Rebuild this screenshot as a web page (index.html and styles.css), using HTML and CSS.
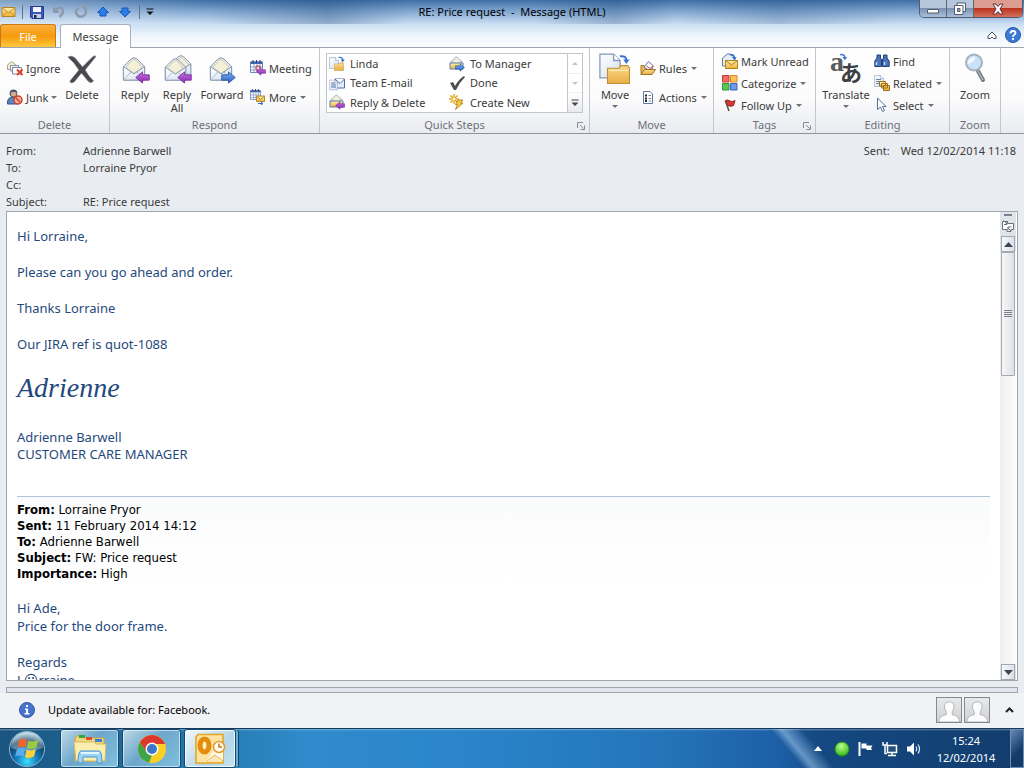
FILE: index.html
```html
<!DOCTYPE html>
<html lang="en">
<head>
    <meta charset="UTF-8">
    <meta name="viewport" content="width=device-width, initial-scale=1.0">
    <title>RE: Price request - Message (HTML)</title>
    <link rel="stylesheet" href="styles.css">
</head>
<body>

    <!-- shared icon shapes -->
    <svg class="defs" aria-hidden="true">
        <defs>
            <linearGradient id="g-yellow" x1="0" y1="0" x2="0" y2="1">
                <stop offset="0" stop-color="#fff0b0"/><stop offset="1" stop-color="#f0b030"/>
            </linearGradient>
            <linearGradient id="g-folder" x1="0" y1="0" x2="0" y2="1">
                <stop offset="0" stop-color="#fbd98b"/><stop offset="1" stop-color="#e9ae45"/>
            </linearGradient>
            <linearGradient id="g-paper" x1="0" y1="0" x2="1" y2="1">
                <stop offset="0" stop-color="#ffffff"/><stop offset="1" stop-color="#d5e0ee"/>
            </linearGradient>
            <linearGradient id="g-purple" x1="0" y1="0" x2="0" y2="1">
                <stop offset="0" stop-color="#c66fe0"/><stop offset="1" stop-color="#8a2bb0"/>
            </linearGradient>
            <linearGradient id="g-blue" x1="0" y1="0" x2="0" y2="1">
                <stop offset="0" stop-color="#7fb2f5"/><stop offset="1" stop-color="#2a5fc4"/>
            </linearGradient>
            <radialGradient id="g-orb" cx="0.5" cy="0.85" r="0.8">
                <stop offset="0" stop-color="#3ce0ff"/><stop offset="0.4" stop-color="#1478ba"/><stop offset="0.75" stop-color="#123f66"/><stop offset="1" stop-color="#a9cbdc"/>
            </radialGradient>
            <radialGradient id="g-green" cx="0.45" cy="0.3" r="0.7">
                <stop offset="0" stop-color="#b9ff8e"/><stop offset="1" stop-color="#35b81a"/>
            </radialGradient>
        </defs>
        <symbol id="envelope-open" viewBox="0 0 24 27">
            <path d="M1 11 L9 3 Q12 0.5 15 3 L23 11 V25 H1 Z" fill="#dfe8f3" stroke="#8495ad"/>
            <path d="M3.500 12 L10 4.500 Q12 3 14 4.500 L20.500 12 L12 18 Z" fill="#f3efd8" stroke="#c9bd92" stroke-width=".7"/>
            <path d="M1 11 L12 18.500 L23 11 V25 H1 Z" fill="url(#g-paper)" stroke="#8495ad"/>
            <path d="M1.500 24.500 L9 16.500 M22.500 24.500 L15 16.500" stroke="#a9b7ca" fill="none"/>
        </symbol>
        <symbol id="arrow-left" viewBox="0 0 14 12">
            <path d="M.7 6 L7 .8 V3.500 H13.300 V8.500 H7 V11.200 Z" fill="url(#g-purple)" stroke="#7a2a9c" stroke-width=".8"/>
        </symbol>
        <symbol id="arrow-right" viewBox="0 0 14 12">
            <path d="M13.300 6 L7 .8 V3.500 H.7 V8.500 H7 V11.200 Z" fill="url(#g-blue)" stroke="#2653a4" stroke-width=".8"/>
        </symbol>
        <symbol id="curve" viewBox="0 0 12 12">
            <path d="M1 2.500 Q8 1.500 8 7" fill="none" stroke="#3b72cf" stroke-width="2.200"/><path d="M4.500 6 H11.500 L8 11 Z" fill="#3b72cf"/>
        </symbol>
        <symbol id="sheet" viewBox="0 0 12 14">
            <path d="M.5 .5 H8 L11.500 4 V13.500 H.5 Z" fill="url(#g-paper)" stroke="#8499b8" stroke-width=".7"/><path d="M8 .5 V4 H11.500" fill="#fff" stroke="#8499b8" stroke-width=".7"/>
        </symbol>
        <symbol id="folder" viewBox="0 0 22 19">
            <path d="M.5 4 V18.500 H21.500 V4 L20 1.500 H13 L11.500 4 Z" fill="url(#g-folder)" stroke="#c08e3a"/><path d="M2 6 H20" stroke="#fff1c4"/>
        </symbol>
        <symbol id="calendar" viewBox="0 0 13 13">
            <path d="M.5 2 H12.500 V12.500 H.5 Z" fill="#fff" stroke="#6a85b8"/><path d="M.5 1.500 H12.500 V4 H.5 Z" fill="#4668b0"/><path d="M3 0 V3 M6.500 0 V3 M10 0 V3" stroke="#28427c"/><path d="M1 7 H12 M1 10 H12 M4 4 V12 M7 4 V12 M10 4 V12" stroke="#8ea6cf"/>
        </symbol>
        <symbol id="person" viewBox="0 0 26 26">
            <path d="M2 26 Q2 19 10 18 V15 Q8 13 8 8 Q9 4 13.500 4 Q18 4 18.500 8 Q18.500 13 16.500 15 V18 Q24 19 24.500 26 Z" fill="#fdfdfd" stroke="#aeb0b3"/>
        </symbol>
    </svg>

    <header class="titlebar">
        <div class="quick-access">
            <svg width="16" height="16" viewBox="0 0 16 16"><path d="M2 3.500 H15 V12.500 H2 Z" fill="url(#g-yellow)" stroke="#b58520"/><path d="M2 3.500 L8.500 9 L15 3.500 M2 12.500 L6.500 8 M15 12.500 L10.500 8" fill="none" stroke="#c08a25"/></svg>
            <span class="divider"></span>
            <button aria-label="Save"><svg width="16" height="16" viewBox="0 0 16 16"><path d="M1.500 2.500 H14.500 V14.500 H3 L1.500 13 Z" fill="#3c56c0" stroke="#26378c"/><path d="M4 3 H12 V8 H4 Z" fill="#f3f6ff"/><path d="M4 10 H12 V14 H4 Z" fill="#c7cddc"/><path d="M5 11 H7.500 V14 H5 Z" fill="#222c5c"/></svg></button>
            <button aria-label="Undo"><svg width="16" height="16" viewBox="0 0 16 16"><path d="M5 6 Q8 2.500 11 4.500 Q14 8 8.500 13" fill="none" stroke="#8d98a9" stroke-width="2.500"/><path d="M2 2 V9 H9 Z" fill="#8d98a9"/></svg></button>
            <button aria-label="Repeat"><svg width="16" height="16" viewBox="0 0 16 16"><path d="M6 4 Q2 6 3.500 10 Q6 14 10.500 12 Q14.500 9 12 5" fill="none" stroke="#8f9aaa" stroke-width="2.500"/><path d="M8 2 H14 V8 Z" fill="#8f9aaa"/></svg></button>
            <button aria-label="Previous item"><svg width="16" height="16" viewBox="0 0 16 16"><path d="M8 3 L13.500 8.500 H11 V12 H5 V8.500 H2.500 Z" fill="#2b7de8" stroke="#1b55b4"/></svg></button>
            <button aria-label="Next item"><svg width="16" height="16" viewBox="0 0 16 16"><path d="M8 13 L13.500 7.500 H11 V4 H5 V7.500 H2.500 Z" fill="#2b7de8" stroke="#1b55b4"/></svg></button>
            <span class="divider"></span>
            <button aria-label="Customize toolbar"><svg width="8" height="8" viewBox="0 0 8 8"><path d="M.5 1 H7.500" stroke="#111"/><path d="M.5 3.500 H7.500 L4 7 Z" fill="#111"/></svg></button>
        </div>
        <h1>RE: Price request&nbsp; -&nbsp; Message (HTML)</h1>
        <div class="window-controls">
            <button aria-label="Minimize"><svg width="14" height="12" viewBox="0 0 14 12"><path d="M1.500 6.500 H12.500 V10 H1.500 Z" fill="#fff" stroke="#525c6c"/></svg></button>
            <button aria-label="Restore"><svg width="14" height="14" viewBox="0 0 14 14"><path d="M4 1 H12.500 V9.500 H4 Z" fill="#fff" stroke="#525c6c"/><path d="M1.500 3.500 H10 V12.500 H1.500 Z" fill="#fff" stroke="#525c6c"/><path d="M4.500 6.500 H7 V9.500 H4.500 Z" fill="#98aac2" stroke="#525c6c"/></svg></button>
            <button class="close" aria-label="Close"><svg width="14" height="12" viewBox="0 0 14 12"><path d="M2 1 H5 L7 3.500 L9 1 H12 L9 6 L12 11 H9 L7 8.500 L5 11 H2 L5 6 Z" fill="#fff" stroke="#5c3036"/></svg></button>
        </div>
    </header>

    <nav class="tabs">
        <button class="tab file">File</button>
        <button class="tab active">Message</button>
        <div class="tab-tools">
            <button aria-label="Minimize the ribbon"><svg width="10" height="9" viewBox="0 0 10 9"><path d="M1 5 L5 1 L9 5 V7.500 H6.500 L5 6 L3.500 7.500 H1 Z" fill="#fff" stroke="#454d5a"/></svg></button>
            <button aria-label="Help"><svg width="16" height="16" viewBox="0 0 16 16"><circle cx="8" cy="8" r="7.500" fill="#3b79d6" stroke="#28569e"/><path d="M5.500 6.500 Q5.500 4 8 4 Q10.500 4 10.500 6 Q10.500 7 9 8 Q8 8.500 8 10 M8 11 V13" fill="none" stroke="#fff" stroke-width="1.800"/></svg></button>
        </div>
    </nav>

    <div class="ribbon">
        <section class="group group-delete">
            <div class="group-body">
                <div class="stack two">
                    <button class="small"><svg width="18" height="16" viewBox="0 0 18 16"><path d="M1.500 5 L5.500 1.500 L10 5 V9.500 H1.500 Z" fill="#f5ecc4" stroke="#a4a38c"/><path d="M4.500 5.500 H12.500 V11 H4.500 Z" fill="#edf2f8" stroke="#8796ad"/><path d="M6.500 7.500 H15.500 V14 H6.500 Z" fill="#fff" stroke="#7488a5"/><path d="M11 9.500 L16.500 15 M16.500 9.500 L11 15" stroke="#e2402c" stroke-width="2"/></svg>Ignore</button>
                    <button class="small"><svg width="18" height="16" viewBox="0 0 18 16"><path d="M1.500 15 Q1 8 7 8 Q12 8 12 15 Z" fill="#5d86c4" stroke="#2f5187"/><circle cx="7.500" cy="4.500" r="3.500" fill="#d2b096" stroke="#59504c"/><path d="M4 6 Q3 .5 8 .8 Q11 1 11 4 Q8 2 5.500 3 Z" fill="#48536b"/><circle cx="12" cy="11" r="4" fill="#f3b3a2" stroke="#d0412a" stroke-width="1.500"/><path d="M9.500 8.500 L14.500 13.500" stroke="#d0412a" stroke-width="1.500"/></svg>Junk<i class="caret"></i></button>
                </div>
                <button class="large"><svg width="32" height="32" viewBox="0 0 32 32"><path d="M2 4 Q6 2 9 5 L16.500 14 L27 3.500 Q30 2 29.500 4 L19 17 Q23 24 27.500 28 Q25 31 22 28 L15.500 20 L8 29 Q4 31 4 28 L13 17 Q8 9 2 4 Z" fill="#46484d" stroke="#77797e" stroke-width=".8"/></svg>Delete</button>
            </div>
            <h2>Delete</h2>
        </section>

        <section class="group group-respond">
            <div class="group-body">
                <button class="large"><svg width="32" height="32" viewBox="0 0 32 32"><use href="#envelope-open" x="3" y="3" width="24" height="26"/><use href="#arrow-left" x="16" y="18" width="15" height="13"/></svg>Reply</button>
                <button class="large"><svg width="32" height="32" viewBox="0 0 32 32"><use href="#envelope-open" x="9" y="1" width="22" height="24"/><use href="#envelope-open" x="3" y="4" width="23" height="25"/><use href="#arrow-left" x="16" y="18" width="15" height="13"/></svg>Reply<br>All</button>
                <button class="large forward"><svg width="32" height="32" viewBox="0 0 32 32"><use href="#envelope-open" x="3" y="3" width="24" height="26"/><use href="#arrow-right" x="15" y="18" width="15" height="13"/></svg>Forward</button>
                <div class="stack two">
                    <button class="small"><svg width="16" height="16" viewBox="0 0 16 16"><use href="#calendar" width="13" height="13"/><path d="M6 6 H10 V10 H6 Z" fill="none" stroke="#d8383a"/><use href="#arrow-left" x="6" y="7" width="10" height="9"/></svg>Meeting</button>
                    <button class="small"><svg width="16" height="16" viewBox="0 0 16 16"><use href="#calendar" width="11" height="11"/><path d="M6.500 7 H14.500 V12.500 H6.500 Z" fill="url(#g-yellow)" stroke="#b18b32"/><path d="M6.500 7 L10.500 10.500 L14.500 7" fill="none" stroke="#b18b32"/><path d="M8 14.500 H12 M11 13 L13 14.500 L11 16" stroke="#3267c6" fill="none"/></svg>More<i class="caret"></i></button>
                </div>
            </div>
            <h2>Respond</h2>
        </section>

        <section class="group group-steps">
            <div class="group-body">
                <div class="gallery">
                    <div class="gallery-items">
                        <button class="small"><svg width="16" height="16" viewBox="0 0 16 16"><use href="#sheet" x="0" y="1" width="10" height="12"/><use href="#folder" x="5" y="6" width="10" height="9"/><use href="#curve" x="9" y="0" width="7" height="7"/></svg>Linda</button>
                        <button class="small"><svg width="16" height="16" viewBox="0 0 16 16"><use href="#envelope-open" x="1" y="0" width="13" height="13"/><path d="M1 7 H14 V13 H1 Z" fill="url(#g-yellow)" stroke="#5b7db4"/><use href="#arrow-right" x="6" y="7" width="10" height="9"/></svg>To Manager</button>
                        <button class="small"><svg width="16" height="16" viewBox="0 0 16 16"><path d="M6 4 H15.500 V13 H6 Z" fill="#dfeafb" stroke="#4f6fa6"/><path d="M6 4 L11 8.500 L15.500 4" fill="#fff" stroke="#4f6fa6"/><use href="#sheet" x="0" y="4" width="9" height="12"/><path d="M2 8 H6 M2 10 H7 M2 12 H7" stroke="#5274ac"/></svg>Team E-mail</button>
                        <button class="small"><svg width="16" height="16" viewBox="0 0 16 16"><path d="M1 8 L4 7 L6 11 Q10 4 15 1 L16 2 Q10 8 7 15 H5 Z" fill="#4b4d51"/></svg>Done</button>
                        <button class="small"><svg width="16" height="16" viewBox="0 0 16 16"><use href="#envelope-open" x="1" y="0" width="13" height="13"/><path d="M1 7 H14 V13 H1 Z" fill="url(#g-yellow)" stroke="#5b7db4"/><use href="#arrow-left" x="6" y="7" width="10" height="9"/></svg>Reply &amp; Delete</button>
                        <button class="small"><svg width="16" height="16" viewBox="0 0 16 16"><path d="M5 0 V10 M0 5 H10 M1.500 1.500 L8.500 8.500 M8.500 1.500 L1.500 8.500" stroke="#e5a818" stroke-width="1.500"/><circle cx="5" cy="5" r="1.500" fill="#fff"/><path d="M9 6 H14 L11.500 9 H14 L6.500 15.500 L8.500 10.500 H6.500 Z" fill="#f7cd3e" stroke="#a47516" stroke-width=".8"/></svg>Create New</button>
                    </div>
                    <div class="gallery-scroll">
                        <button disabled aria-label="Scroll up"><i class="caret up"></i></button>
                        <button disabled aria-label="Scroll down"><i class="caret"></i></button>
                        <button aria-label="More quick steps"><svg width="8" height="8" viewBox="0 0 8 8"><path d="M.5 1 H7.500" stroke="#444"/><path d="M.5 3.500 H7.500 L4 7 Z" fill="#444"/></svg></button>
                    </div>
                </div>
            </div>
            <h2>Quick Steps</h2>
            <button class="launcher" aria-label="Manage quick steps"><svg width="8" height="8" viewBox="0 0 8 8"><path d="M.5 6 V.5 H6 M3 3 L6.500 6.500 M7.500 3.500 V7.500 H3.500" fill="none" stroke="#858c96"/></svg></button>
        </section>

        <section class="group group-move">
            <div class="group-body">
                <button class="large"><svg width="32" height="32" viewBox="0 0 32 32"><use href="#sheet" x="0" y="0" width="22" height="26"/><use href="#folder" x="8" y="11" width="23" height="20"/><use href="#curve" x="20" y="1" width="11" height="11"/></svg>Move<i class="caret"></i></button>
                <div class="stack two">
                    <button class="small"><svg width="16" height="16" viewBox="0 0 16 16"><path d="M1 14.500 V5.500 H4 L5.500 7 H12 V14.500 Z" fill="#edb84e" stroke="#a57423"/><path d="M4 7 L8.500 1.500 L13.500 6 L10 11 Z" fill="#fff" stroke="#5c76a8"/><path d="M6.500 6 L10 8.500 L13 6" fill="none" stroke="#be4858"/><path d="M1 14.500 L4.500 9.500 H15.500 L12 14.500 Z" fill="url(#g-folder)" stroke="#a57423"/></svg>Rules<i class="caret"></i></button>
                    <button class="small"><svg width="16" height="16" viewBox="0 0 16 16"><path d="M3.500 2.500 H10 L12.500 5 V14.500 H3.500 Z" fill="#fff" stroke="#5a78a8"/><path d="M5 6.500 H7 M5 9.500 H7 M5 12 H7" stroke="#222" stroke-width="2"/><path d="M8.500 6.500 H11 M8.500 9.500 H11 M8.500 12 H11" stroke="#7b8ba5"/></svg>Actions<i class="caret"></i></button>
                </div>
            </div>
            <h2>Move</h2>
        </section>

        <section class="group group-tags">
            <div class="group-body">
                <div class="stack three">
                    <button class="small"><svg width="16" height="16" viewBox="0 0 16 16"><path d="M.5 5 L6 .5 L13 4 V13 H.5 Z" fill="#e5edf7" stroke="#657fa7"/><path d="M3.500 7.500 H15.500 V15.500 H3.500 Z" fill="url(#g-yellow)" stroke="#b58223"/><path d="M3.500 7.500 L9.500 12 L15.500 7.500" fill="none" stroke="#b58223"/><use href="#curve" x="7" y="0" width="8" height="8"/></svg>Mark Unread</button>
                    <button class="small"><svg width="16" height="16" viewBox="0 0 16 16"><path d="M.5 .5 H7 V7 H.5 Z" fill="#f26a64" stroke="#c93b38"/><path d="M8.500 .5 H15 V7 H8.500 Z" fill="#ffc35a" stroke="#d98b20"/><path d="M.5 8.500 H7 V15 H.5 Z" fill="#5cc25c" stroke="#2f9a36"/><path d="M8.500 8.500 H15 V15 H8.500 Z" fill="#6b9bea" stroke="#3565bd"/></svg>Categorize<i class="caret"></i></button>
                    <button class="small"><svg width="16" height="16" viewBox="0 0 16 16"><path d="M3 4 Q5 2 8 4 Q10 5.500 13 3.500 L11.500 8.500 Q9 10 6 8.500 Z" fill="#d93a2b" stroke="#98201a"/><path d="M3.500 4 L7 14" stroke="#55504c" stroke-width="1.500"/></svg>Follow Up<i class="caret"></i></button>
                </div>
            </div>
            <h2>Tags</h2>
            <button class="launcher" aria-label="Message options"><svg width="8" height="8" viewBox="0 0 8 8"><path d="M.5 6 V.5 H6 M3 3 L6.500 6.500 M7.500 3.500 V7.500 H3.500" fill="none" stroke="#858c96"/></svg></button>
        </section>

        <section class="group group-editing">
            <div class="group-body">
                <button class="large translate"><svg width="32" height="32" viewBox="0 0 32 32"><text class="glyph-a" x="0" y="18">a</text><text class="glyph-kana" x="10" y="28">あ</text><use href="#curve" x="8" y="0" width="11" height="8"/></svg>Translate<i class="caret"></i></button>
                <div class="stack three">
                    <button class="small"><svg width="16" height="16" viewBox="0 0 16 16"><path d="M3 2 H6.500 V5 L7.500 7 V13.500 H.8 V8 L3 5 Z M9.500 2 H13 V5 L15.200 8 V13.500 H8.500 V7 L9.500 5 Z" fill="#4a73ba" stroke="#223f7c"/><path d="M2.500 9 V12 M10.500 9 V12" stroke="#c4dafb" stroke-width="1.500"/><path d="M7 7.500 H9" stroke="#223f7c" stroke-width="2"/></svg>Find</button>
                    <button class="small"><svg width="16" height="16" viewBox="0 0 16 16"><use href="#sheet" x="0" y="0" width="10" height="12"/><path d="M2 4.500 H7 M2 6.500 H7 M2 8.500 H7" stroke="#6382b6"/><path d="M5.500 6.500 H11.500 V11 H5.500 Z M7.500 8.500 H13.500 V13 H7.500 Z M9.500 10.500 H15.500 V15.500 H9.500 Z" fill="url(#g-yellow)" stroke="#9a6f18"/></svg>Related<i class="caret"></i></button>
                    <button class="small"><svg width="16" height="16" viewBox="0 0 16 16"><path d="M3.500 1 V12.500 L6.500 10 L8.500 14.500 L10.500 13.500 L8.500 9.500 H12 Z" fill="#fff" stroke="#53719f"/></svg>Select<i class="caret"></i></button>
                </div>
            </div>
            <h2>Editing</h2>
        </section>

        <section class="group group-zoom">
            <div class="group-body">
                <button class="large"><svg width="32" height="32" viewBox="0 0 32 32"><path d="M19 18 L24 27" stroke="#6f757e" stroke-width="4" stroke-linecap="round"/><path d="M19 18 L24 27" stroke="#b4bac2" stroke-width="1.500"/><circle cx="15" cy="9.500" r="8" fill="#c9e1f8" stroke="#a5b0be" stroke-width="2"/><path d="M8.500 11 Q9 4 16 3.500 Q17 9 8.500 11 Z" fill="#f3f9ff"/></svg>Zoom</button>
            </div>
            <h2>Zoom</h2>
        </section>
    </div>

    <div class="message-header">
        <dl>
            <dt>From:</dt><dd>Adrienne Barwell</dd>
            <dt>To:</dt><dd>Lorraine Pryor</dd>
            <dt>Cc:</dt><dd></dd>
            <dt>Subject:</dt><dd>RE: Price request</dd>
        </dl>
        <p class="sent"><span>Sent:</span> Wed 12/02/2014 11:18</p>
    </div>

    <main class="message">
        <article class="message-text">
            <p>Hi Lorraine,</p>
            <p>Please can you go ahead and order.</p>
            <p>Thanks Lorraine</p>
            <p>Our JIRA ref is quot-1088</p>
            <p class="signature">Adrienne</p>
            <p class="job">Adrienne Barwell<br>CUSTOMER CARE MANAGER</p>
            <div class="quoted">
                <b>From:</b> Lorraine Pryor<br>
                <b>Sent:</b> 11 February 2014 14:12<br>
                <b>To:</b> Adrienne Barwell<br>
                <b>Subject:</b> FW: Price request<br>
                <b>Importance:</b> High
            </div>
            <p>Hi Ade,<br>Price for the door frame.</p>
            <p>Regards<br>L<span class="smiley">☺</span>rraine</p>
        </article>
        <div class="scrollbar">
            <span class="split-handle"></span>
            <button class="ruler" aria-label="View ruler"><svg width="14" height="14" viewBox="0 0 14 14"><path d="M1.500 2.500 H6.500 V4.500 H12.500 V10.500 H10 V12.500 H6 V10.500 H1.500 Z" fill="#fff" stroke="#6a707b"/><path d="M2.500 1.500 L6 5 M6 2 V5.500 H3 M6.500 8.500 L10 12 M7 11 V8 H10.500" fill="none" stroke="#6a707b"/></svg></button>
            <button class="scroll-arrow" aria-label="Scroll up"><svg width="9" height="5" viewBox="0 0 9 5"><path d="M0 5 L4.500 0 L9 5 Z" fill="#3c455c"/></svg></button>
            <div class="track"><div class="thumb"><i></i></div></div>
            <button class="scroll-arrow" aria-label="Scroll down"><svg width="9" height="5" viewBox="0 0 9 5"><path d="M0 0 L4.500 5 L9 0 Z" fill="#3c455c"/></svg></button>
        </div>
    </main>

    <div class="splitter"></div>

    <div class="people-pane">
        <svg width="16" height="16" viewBox="0 0 16 16"><circle cx="8" cy="8" r="7.500" fill="#4573cd" stroke="#3157a5"/><path d="M7 3 H9 V5 H7 Z M6 6.500 H9 V11 H10.500 V12.500 H5.500 V11 H7 V8 H6 Z" fill="#fff"/></svg>
        <p>Update available for: Facebook.</p>
        <svg class="avatar" viewBox="0 0 26 26"><use href="#person"/></svg>
        <svg class="avatar" viewBox="0 0 26 26"><use href="#person"/></svg>
        <button aria-label="Expand people pane"><svg width="9" height="6" viewBox="0 0 9 6"><path d="M1 5 L4.500 1.500 L8 5" fill="none" stroke="#222" stroke-width="2"/></svg></button>
    </div>

    <footer class="taskbar">
        <button class="start" aria-label="Start"><svg width="38" height="38" viewBox="0 0 38 38"><circle cx="19" cy="19" r="17.500" fill="url(#g-orb)" stroke="#8cb9cf"/><path d="M3 18 Q4 3 19 2.500 Q34 3 35 18 Q19 24 3 18 Z" fill="#fff" opacity=".3"/><path d="M11 10 Q15 7.500 19 10 L17.500 17.500 Q14 15.500 9.500 17.500 Z" fill="#f0642b"/><path d="M20.500 10.500 Q25 12.500 30.500 10 L28.500 17.500 Q24 20 19 18 Z" fill="#98cb42"/><path d="M9 19 Q13 17 17 19 L15.500 26.500 Q11.500 24.500 7 26.500 Z" fill="#5aadea"/><path d="M18.500 19.500 Q23 21.500 28 19 L26 26.500 Q21 29 17 27 Z" fill="#fbd03a"/></svg></button>
        <button class="app" aria-label="Explorer"><svg width="34" height="30" viewBox="0 0 34 30"><path d="M2 5 L3 2 H12 L13 4 H31 V27 H2 Z" fill="#f1d77c" stroke="#c6a645"/><path d="M6 1 H12 V4 H6 Z" fill="#35a648"/><path d="M13 3 H19 V6 H13 Z" fill="#dc4c35"/><path d="M22 5 H29 V8 H22 Z" fill="#3a80cf"/><path d="M1 8 H21 L23 10 H33 L32 27 H3 Z" fill="#fbeeb1" stroke="#d3b966"/><path d="M5 29 Q5 17 8 17 H26 Q29 17 29 29 H24 V23 H10 V29 Z" fill="#9bd5f5" stroke="#4797cd"/><path d="M8 19 H26" stroke="#e4f7ff" stroke-width="2"/></svg></button>
        <button class="app" aria-label="Chrome"><svg width="30" height="30" viewBox="0 0 30 30"><circle cx="15" cy="15" r="14" fill="#f9cf25"/><path d="M2.900 8 A14 14 0 0 1 27.100 8 L28 10 H15 L9 18 Z" fill="#dd382b"/><path d="M2.900 8 L9.500 18.500 L15 21 L12 28.700 A14 14 0 0 1 2.900 8 Z" fill="#3fa549"/><circle cx="15" cy="15" r="6.500" fill="#fff"/><circle cx="15" cy="15" r="5" fill="#3977ca"/></svg></button>
        <button class="app outlook" aria-label="Outlook"><svg width="32" height="32" viewBox="0 0 32 32"><path d="M4 1.500 H29 V30 H2 V4 Z" fill="#fbe3a2" stroke="#e4a322" stroke-width="1.500"/><path d="M13 27 L19 18 H29 V28 H13 Z" fill="#fff8e5"/><path d="M13 28 L21 22 L29 28" fill="#fce9ba" stroke="#e8b752"/><ellipse cx="10.500" cy="12.500" rx="4.500" ry="6.500" fill="#fff1c2" stroke="#e58c0c" stroke-width="5"/><circle cx="25" cy="14" r="5.500" fill="#fffdf5" stroke="#e59b27" stroke-width="1.500"/><path d="M25 10.500 V14 H28" fill="none" stroke="#c87910" stroke-width="1.500"/></svg></button>
        <div class="tray">
            <button aria-label="Show hidden icons"><svg width="8" height="5" viewBox="0 0 8 5"><path d="M0 5 L4 0 L8 5 Z" fill="#fff"/></svg></button>
            <svg width="16" height="16" viewBox="0 0 16 16"><circle cx="8" cy="8" r="7" fill="url(#g-green)" stroke="#2b8f18"/></svg>
            <svg width="16" height="16" viewBox="0 0 16 16"><path d="M1.500 1 V15" stroke="#fff" stroke-width="2"/><path d="M3.500 2.500 H8.500 V4.500 H14.500 L13 7 L14 9 H8.500 V7.500 H3.500 Z" fill="#fff"/></svg>
            <svg width="16" height="16" viewBox="0 0 16 16"><path d="M5.500 4.500 H14.500 V11.500 H5.500 Z" fill="#274f7e" stroke="#fff" stroke-width="1.500"/><path d="M6 14.500 H14 M10 12 V14" stroke="#fff" stroke-width="1.500"/><path d="M1 1 V4 H5 V1 M3 4 V12.500 H5" fill="none" stroke="#fff" stroke-width="1.500"/></svg>
            <svg width="16" height="16" viewBox="0 0 16 16"><path d="M1 5.500 H4 L8 1.500 V14.500 L4 10.500 H1 Z" fill="#fff"/><path d="M10 5.500 Q11.500 8 10 10.500 M12 3.500 Q15 8 12 12.500" fill="none" stroke="#dceafa" stroke-width="1.200"/></svg>
        </div>
        <div class="clock"><time>15:24</time><time>12/02/2014</time></div>
        <button class="show-desktop" aria-label="Show desktop"></button>
    </footer>

</body>
</html>
```
FILE: styles.css
```css
* {
    box-sizing: border-box;
}

body {
    display: flex;
    flex-direction: column;
    height: 100vh;
    margin: 0;
    overflow: hidden;
    background-color: #e9ecf1;
    color: #3b3b3b;
    font-family: "Noto Sans", "Open Sans", sans-serif;
    font-size: 11px;
}

h1, h2, p, dl, dd {
    margin: 0;
    font-weight: normal;
}

button {
    padding: 0;
    border: none;
    background: none;
    color: inherit;
    font: inherit;
    cursor: pointer;
}

svg {
    flex: none;
}

.defs {
    position: absolute;
    width: 0;
    height: 0;
}

/* title bar */
.titlebar {
    display: grid;
    grid-template-columns: 1fr auto 1fr;
    height: 24px;
    background: linear-gradient(90deg, rgba(255, 255, 255, 0.35), transparent 20%, rgba(20, 60, 110, 0.3) 32%, transparent 40%, transparent 52%, rgba(20, 60, 110, 0.25) 60%, transparent 66%, rgba(20, 60, 110, 0.2) 76%, transparent 88%),
        linear-gradient(#3f6fa6, #7fa5d0 45%, #cbdff3);
}

.titlebar h1 {
    color: #000;
    font-size: 11px;
    line-height: 24px;
}

.quick-access {
    display: flex;
    align-items: center;
    gap: 6px;
}

.quick-access button {
    display: flex;
}

.divider {
    width: 1px;
    height: 14px;
    background-color: #5a7390;
}

.window-controls {
    display: flex;
    justify-self: end;
    height: 18px;
    margin-right: 1px;
    border: 1px solid #505d70;
    border-top: none;
    border-radius: 0 0 5px 5px;
    overflow: hidden;
}

.window-controls button {
    display: flex;
    align-items: center;
    justify-content: center;
    width: 27px;
    border-right: 1px solid #56657a;
    background: linear-gradient(#b6c7dc 45%, #7a93b1 50%, #a9bfda);
}

.window-controls .close {
    width: 48px;
    border-right: none;
    background: linear-gradient(#dc9c90 45%, #bc3420 50%, #d5705c);
}

/* tab row */
.tabs {
    display: flex;
    align-items: flex-end;
    height: 24px;
    border-bottom: 1px solid #9ba5b3;
    background: linear-gradient(#cbdff3, #edf5fc 50%, #fcfdff);
}

.tab {
    height: 23px;
    font-size: 11px;
    border: 1px solid #a7b0bd;
    border-bottom: none;
    border-radius: 3px 3px 0 0;
}

.file {
    width: 56px;
    margin-right: 4px;
    border-color: #c97a14;
    background: linear-gradient(#fbb040, #f59a0c 50%, #ffc83e);
    color: #fff;
}

.active {
    width: 71px;
    height: 24px;
    margin-bottom: -1px;
    background-color: #fff;
}

.tab-tools {
    display: flex;
    align-items: center;
    gap: 8px;
    height: 24px;
    margin-left: auto;
    padding-right: 3px;
}

.tab-tools button {
    display: flex;
}

/* ribbon */
.ribbon {
    display: flex;
    height: 86px;
    border-bottom: 1px solid #8e949d;
    background: linear-gradient(#fff, #fbfbfc 60%, #e9ebef);
}

.group {
    position: relative;
    display: flex;
    flex-direction: column;
    justify-content: space-between;
    border-right: 1px solid #c3c7cd;
}

.group-delete { width: 110px; }
.group-respond { width: 210px; }
.group-steps { width: 270px; }
.group-move { width: 124px; }
.group-tags { width: 102px; }
.group-editing { width: 134px; }
.group-zoom { width: 51px; }

.group-body {
    display: flex;
    padding: 0 4px;
}

.group-delete .group-body,
.group-steps .group-body,
.group-editing .group-body {
    padding: 0 6px;
}

.group-tags .group-body {
    padding: 0 8px;
}

.group h2 {
    color: #6b7079;
    font-size: 11px;
    line-height: 16px;
    text-align: center;
}

.large {
    display: flex;
    flex-direction: column;
    align-items: center;
    flex: none;
    width: 42px;
    padding-top: 5px;
    line-height: 13px;
}

.large svg {
    margin-bottom: 3px;
}

.forward {
    width: 48px;
}

.translate {
    width: 48px;
}

.translate svg {
    overflow: visible;
}

.small {
    display: flex;
    align-items: center;
    gap: 3px;
    height: 22px;
    white-space: nowrap;
}

.stack {
    display: flex;
    flex-direction: column;
    padding-left: 4px;
}

.two {
    gap: 7px;
    padding-top: 9px;
}

.three {
    padding-top: 2px;
}

.group-delete .stack {
    width: 57px;
}

.group-delete .stack,
.group-tags .stack {
    padding-left: 0;
}

.group-delete .small {
    gap: 2px;
}

.caret {
    border: 3px solid transparent;
    border-top-color: #6d7179;
    border-bottom: none;
}

.small .caret {
    margin-left: 1px;
}

.large .caret {
    margin-top: 4px;
}

.caret.up {
    border-top: none;
    border-bottom: 3px solid #6d7179;
}

.gallery {
    display: flex;
    flex: 1;
    height: 60px;
    margin-top: 5px;
    border: 1px solid #c2c6cc;
    background-color: #fff;
}

.gallery-items {
    display: grid;
    grid-template-columns: 120px 1fr;
    flex: 1;
    padding-left: 2px;
}

.gallery-items .small {
    gap: 5px;
    height: 19px;
}

.gallery-scroll {
    display: flex;
    flex-direction: column;
    width: 15px;
    border-left: 1px solid #c2c6cc;
}

.gallery-scroll button {
    display: flex;
    align-items: center;
    justify-content: center;
    flex: 1;
    border-bottom: 1px solid #d8dbe0;
}

.gallery-scroll button:last-child {
    border-bottom: none;
    background: linear-gradient(#fff, #e8eaee);
}

.gallery-scroll button:disabled {
    opacity: 0.4;
}

.launcher {
    position: absolute;
    right: 4px;
    bottom: 3px;
    display: flex;
}

.glyph-a {
    font: bold 28px "Liberation Serif", serif;
    fill: #585b60;
}

.glyph-kana {
    font: bold 22px "Noto Sans CJK JP", sans-serif;
    fill: #3c3e42;
}

/* sender and subject */
.message-header {
    display: flex;
    justify-content: space-between;
    padding: 8px 8px 1px 6px;
    line-height: 17px;
}

.message-header dl {
    display: grid;
    grid-template-columns: 77px auto;
    grid-auto-rows: 17px;
}

.sent span {
    margin-right: 8px;
}

/* message body */
.message {
    display: flex;
    flex: 1;
    min-height: 0;
    margin: 0 6px;
    border: 1px solid #a0a6b0;
    background-color: #fff;
    overflow: hidden;
}

.message-text {
    flex: 1;
    padding: 15px 10px 0;
    color: #1f497d;
    font-size: 13px;
    line-height: 18px;
}

.message-text p {
    margin-bottom: 18px;
}

.message-text .signature {
    margin-bottom: 24px;
    font-family: "Monotype Corsiva", "Liberation Serif", serif;
    font-size: 28px;
    font-style: italic;
    line-height: 34px;
}

.message-text .job {
    margin-bottom: 33px;
    line-height: 17px;
}

.quoted {
    margin-bottom: 17px;
    padding-top: 5px;
    border-top: 1px solid #b5c4df;
    background: linear-gradient(#fafbfc, #fff);
    color: #000;
    font-family: "DejaVu Sans Condensed", "DejaVu Sans", sans-serif;
    font-size: 13px;
    line-height: 16px;
}

.smiley {
    font-family: "DejaVu Sans", sans-serif;
    font-size: 14px;
    line-height: 1;
}

.scrollbar {
    display: flex;
    flex-direction: column;
    width: 17px;
    border-right: 1px solid #fff;
    background-color: #dfe3ea;
}

.split-handle {
    height: 2px;
    margin: 2px 4px 0;
    background-color: #7b828f;
}

.ruler {
    display: flex;
    justify-content: center;
    align-items: center;
    height: 20px;
}

.scroll-arrow {
    display: flex;
    justify-content: center;
    align-items: center;
    flex: none;
    height: 16px;
    margin: 0 1px;
    border: 1px solid #a3a9b3;
    background: linear-gradient(90deg, #f8f8f9, #dde0e6);
}

.track {
    flex: 1;
    background: linear-gradient(90deg, #eee, #fcfcfc);
}

.thumb {
    display: flex;
    align-items: center;
    justify-content: center;
    height: 30%;
    margin: 0 1px;
    border: 1px solid #a3a9b3;
    border-radius: 1px;
    background: linear-gradient(90deg, #f7f7f8, #dfe1e5);
}

.thumb i {
    width: 8px;
    height: 7px;
    background: repeating-linear-gradient(#7b8088 0 1px, transparent 1px 2px);
}

.splitter {
    height: 6px;
    margin: 6px 6px 0;
    border: 1px solid #a0a6b0;
    background-color: #e2e5ec;
}

.people-pane {
    display: flex;
    align-items: center;
    height: 35px;
    padding: 0 10px 2px 19px;
    background-color: #f1f2f4;
    color: #000;
}

.people-pane p {
    flex: 1;
    margin-left: 13px;
}

.people-pane button {
    display: flex;
    margin-left: 15px;
}

.avatar {
    width: 26px;
    height: 26px;
    margin-left: 2px;
    border: 1px solid #85888e;
    background: linear-gradient(#e8e9ea, #cfd0d3);
}

/* taskbar */
.taskbar {
    display: flex;
    height: 40px;
    border-top: 1px solid #173a5c;
    background: linear-gradient(rgba(255, 255, 255, 0.35), transparent 2px),
        linear-gradient(50deg, transparent 76%, rgba(180, 215, 245, 0.5) 77%, rgba(12, 48, 95, 0.2) 79%),
        linear-gradient(90deg, #1b5580, #20709f 15%, #2f8bcb 30%, #2a85cb 45%, #2474b8 65%, #1d5fa6 76%, #164f8a 80%, #143f70);
}

.start {
    display: flex;
    align-items: center;
    width: 60px;
    padding-left: 8px;
}

.app {
    display: flex;
    align-items: center;
    justify-content: center;
    width: 59px;
    margin-right: 3px;
    border: 1px solid #10496f;
    border-radius: 3px;
    box-shadow: inset 0 0 0 1px rgba(255, 255, 255, 0.55);
    background: linear-gradient(135deg, #c0dae8, #6da7cb 45%, #7fc0e0);
}

.outlook {
    width: 52px;
    box-shadow: inset 0 0 0 1px rgba(255, 255, 255, 0.8), 3px 0 0 -1px #6eaed4, 4px 0 0 -1px #10496f;
    background: linear-gradient(135deg, #f2f8fb, #b4d6e8 60%, #c5e2f0);
}

.tray {
    display: flex;
    align-items: center;
    gap: 8px;
    margin-left: auto;
}

.tray button {
    display: flex;
    margin-right: 4px;
}

.clock {
    display: flex;
    flex-direction: column;
    justify-content: center;
    width: 88px;
    color: #fff;
    line-height: 17px;
    text-align: center;
}

.show-desktop {
    width: 14px;
    border: 1px solid #6d90b8;
    background: linear-gradient(135deg, #6389b3, #153a68 60%);
}
```
